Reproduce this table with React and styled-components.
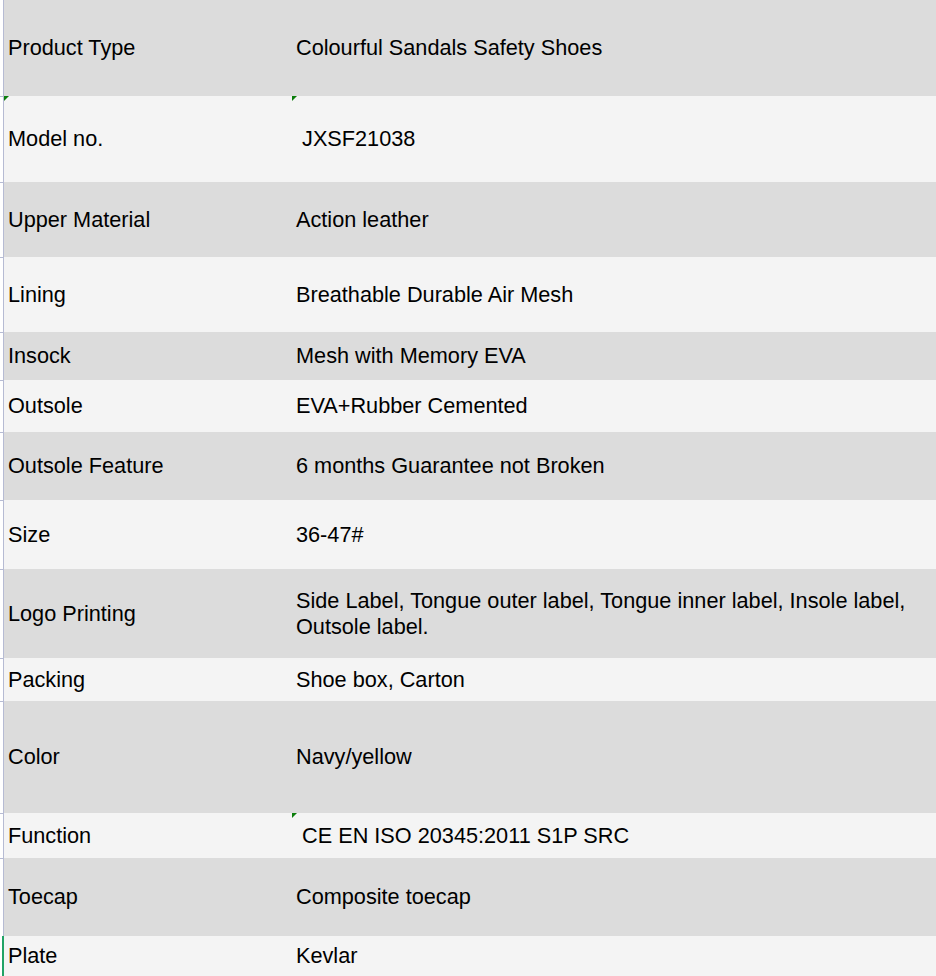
import React from "react";
import styled, { createGlobalStyle } from "styled-components";

const rows = [
   { label: "Product Type", value: "Colourful Sandals Safety Shoes", height: 96 },
   { label: "Model no.", value: " JXSF21038", height: 86, markLabel: true, markValue: true },
   { label: "Upper Material", value: "Action leather", height: 75 },
   { label: "Lining", value: "Breathable Durable Air Mesh", height: 75 },
   { label: "Insock", value: "Mesh with Memory EVA", height: 48 },
   { label: "Outsole", value: "EVA+Rubber Cemented", height: 52 },
   { label: "Outsole Feature", value: "6 months Guarantee not Broken", height: 68 },
   { label: "Size", value: "36-47#", height: 69 },
   {
      label: "Logo Printing",
      value: "Side Label, Tongue outer label, Tongue inner label, Insole label, Outsole label.",
      height: 89,
   },
   { label: "Packing", value: "Shoe box, Carton", height: 43 },
   { label: "Color", value: "Navy/yellow", height: 112 },
   { label: "Function", value: " CE EN ISO 20345:2011 S1P SRC", height: 45, markValue: true },
   { label: "Toecap", value: "Composite toecap", height: 78 },
   { label: "Plate", value: "Kevlar", height: 40, active: true },
];

const App = () => {
   return (
      <>
         <GlobalStyle />
         <Sheet>
            {rows.map((row, i) => (
               <Row key={row.label} $height={row.height} $shade={i % 2 === 0}>
                  <Gutter $first={i === 0} $active={row.active} />
                  <Cell $mark={row.markLabel}>{row.label}</Cell>
                  <Cell $mark={row.markValue}>{row.value}</Cell>
               </Row>
            ))}
         </Sheet>
      </>
   );
};

export default App;

const GlobalStyle = createGlobalStyle`
   html, body {
      margin: 0;
      padding: 0;
      background: #ffffff;
   }

   body {
      font-family: "Liberation Sans", Arial, sans-serif;
      overflow: hidden;
   }
`;

const Sheet = styled.div`
   display: flex;
   flex-direction: column;
   width: 936px;
   height: 976px;
   overflow: hidden;
`;

const Row = styled.div`
   display: grid;
   grid-template-columns: 4px 288px 1fr;
   flex: 0 0 ${(p) => p.$height}px;
   height: ${(p) => p.$height}px;
   background: ${(p) => (p.$shade ? "#dcdcdc" : "#f4f4f4")};
`;

const Gutter = styled.div`
   position: relative;
   background: #ffffff;
   border-right: 1px solid #b6bbd3;

   &::before {
      content: "";
      display: ${(p) => (p.$first || p.$active ? "none" : "block")};
      position: absolute;
      top: 0;
      left: 0;
      width: 3px;
      height: 1px;
      background: #b6bbd3;
   }

   &::after {
      content: "";
      display: ${(p) => (p.$active ? "block" : "none")};
      position: absolute;
      top: 0;
      bottom: 0;
      right: -1px;
      width: 2px;
      background: #21a366;
   }
`;

const Cell = styled.div`
   position: relative;
   display: flex;
   align-items: center;
   padding: 0 28px 0 4px;
   font-size: 21.7px;
   line-height: 26px;
   color: #000000;
   white-space: pre-wrap;

   &::before {
      content: "";
      display: ${(p) => (p.$mark ? "block" : "none")};
      position: absolute;
      top: 0;
      left: 0;
      width: 0;
      height: 0;
      border-top: 5px solid #0b7d0b;
      border-right: 5px solid transparent;
   }
`;
